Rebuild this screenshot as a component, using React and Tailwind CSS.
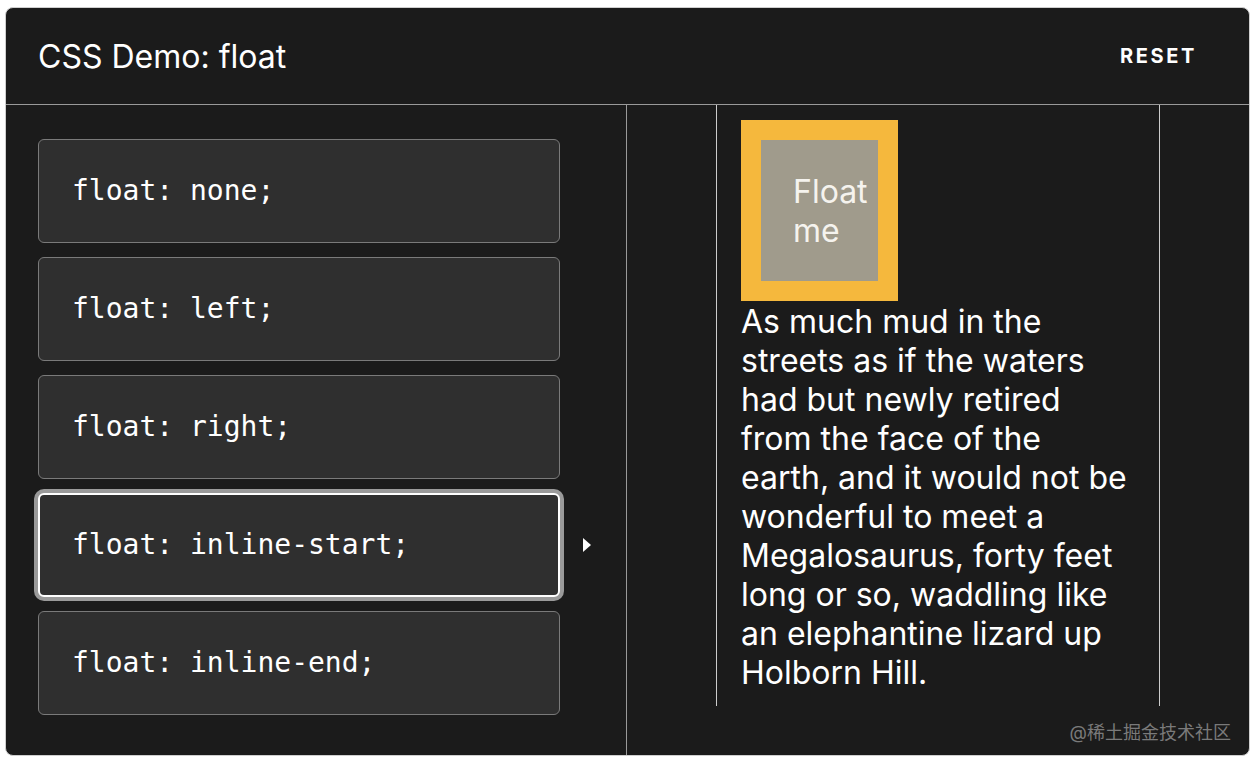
import React, { useState } from 'react';

const options = [
  'float: none;',
  'float: left;',
  'float: right;',
  'float: inline-start;',
  'float: inline-end;',
];

const App = () => {
  const [selected, setSelected] = useState(3);

  return (
    <div className="w-full h-[764px] bg-white pt-[7px] pl-[5px]" style={{ fontFamily: 'Inter, "Noto Sans CJK SC", sans-serif' }}>
      <div className="relative w-[1245px] h-[749px] bg-[#1b1b1b] border border-[#cfcfcf] rounded-[8px] flex flex-col overflow-hidden">
        <header className="h-[97px] shrink-0 flex items-center justify-between pl-[32px] pr-[52px] border-b border-[#9a9a9a]">
          <h1 className="text-white text-[32px] font-normal leading-none pt-[1px]">CSS Demo: float</h1>
          <button className="text-white text-[20px] font-bold tracking-[2.6px] leading-none">RESET</button>
        </header>

        <div className="flex flex-1">
          <section className="w-[621px] shrink-0 border-r border-[#9a9a9a] pl-[32px] pt-[34px] flex flex-col gap-[14px]">
            {options.map((opt, i) => (
              <div key={i} className="flex items-center">
                <button
                  onClick={() => setSelected(i)}
                  className={
                    i === selected
                      ? 'w-[522px] h-[104px] text-left pl-[32px] bg-[#2f2f2f] border-2 border-white rounded-[6px] ring-4 ring-[#9a9a9a] text-white text-[28px]'
                      : 'w-[522px] h-[104px] text-left pl-[33px] bg-[#2f2f2f] border border-[#7a7a7a] rounded-[6px] text-white text-[28px]'
                  }
                  style={{ fontFamily: '"DejaVu Sans Mono", monospace' }}
                >
                  {opt}
                </button>
                {i === selected && (
                  <span className="ml-[23px] w-0 h-0 border-y-[7px] border-y-transparent border-l-[8px] border-l-white"></span>
                )}
              </div>
            ))}
          </section>

          <section className="flex-1 pl-[89px]">
            <div className="w-[444px] h-[601px] border-x border-[#cccccc] pl-[24px] pr-[26px] pt-[15px]">
              <div className="w-[157px] h-[181px] border-[20px] border-[#f5b83d] bg-[#a09b8c] pl-[32px] pt-[32px]">
                <p className="text-[#f5f3ee] text-[32px] leading-[39px]">Float me</p>
              </div>
              <p className="text-white text-[32px] leading-[39px] mt-[1px]">
                As much mud in the streets as if the waters had but newly retired from the face of the earth, and it would not be wonderful to meet a Megalosaurus, forty feet long or so, waddling like an elephantine lizard up Holborn Hill.
              </p>
            </div>
          </section>
        </div>

        <span className="absolute right-[18px] bottom-[13px] text-[#7a7a7a] text-[18px] leading-none">@稀土掘金技术社区</span>
      </div>
    </div>
  );
};

export default App;
